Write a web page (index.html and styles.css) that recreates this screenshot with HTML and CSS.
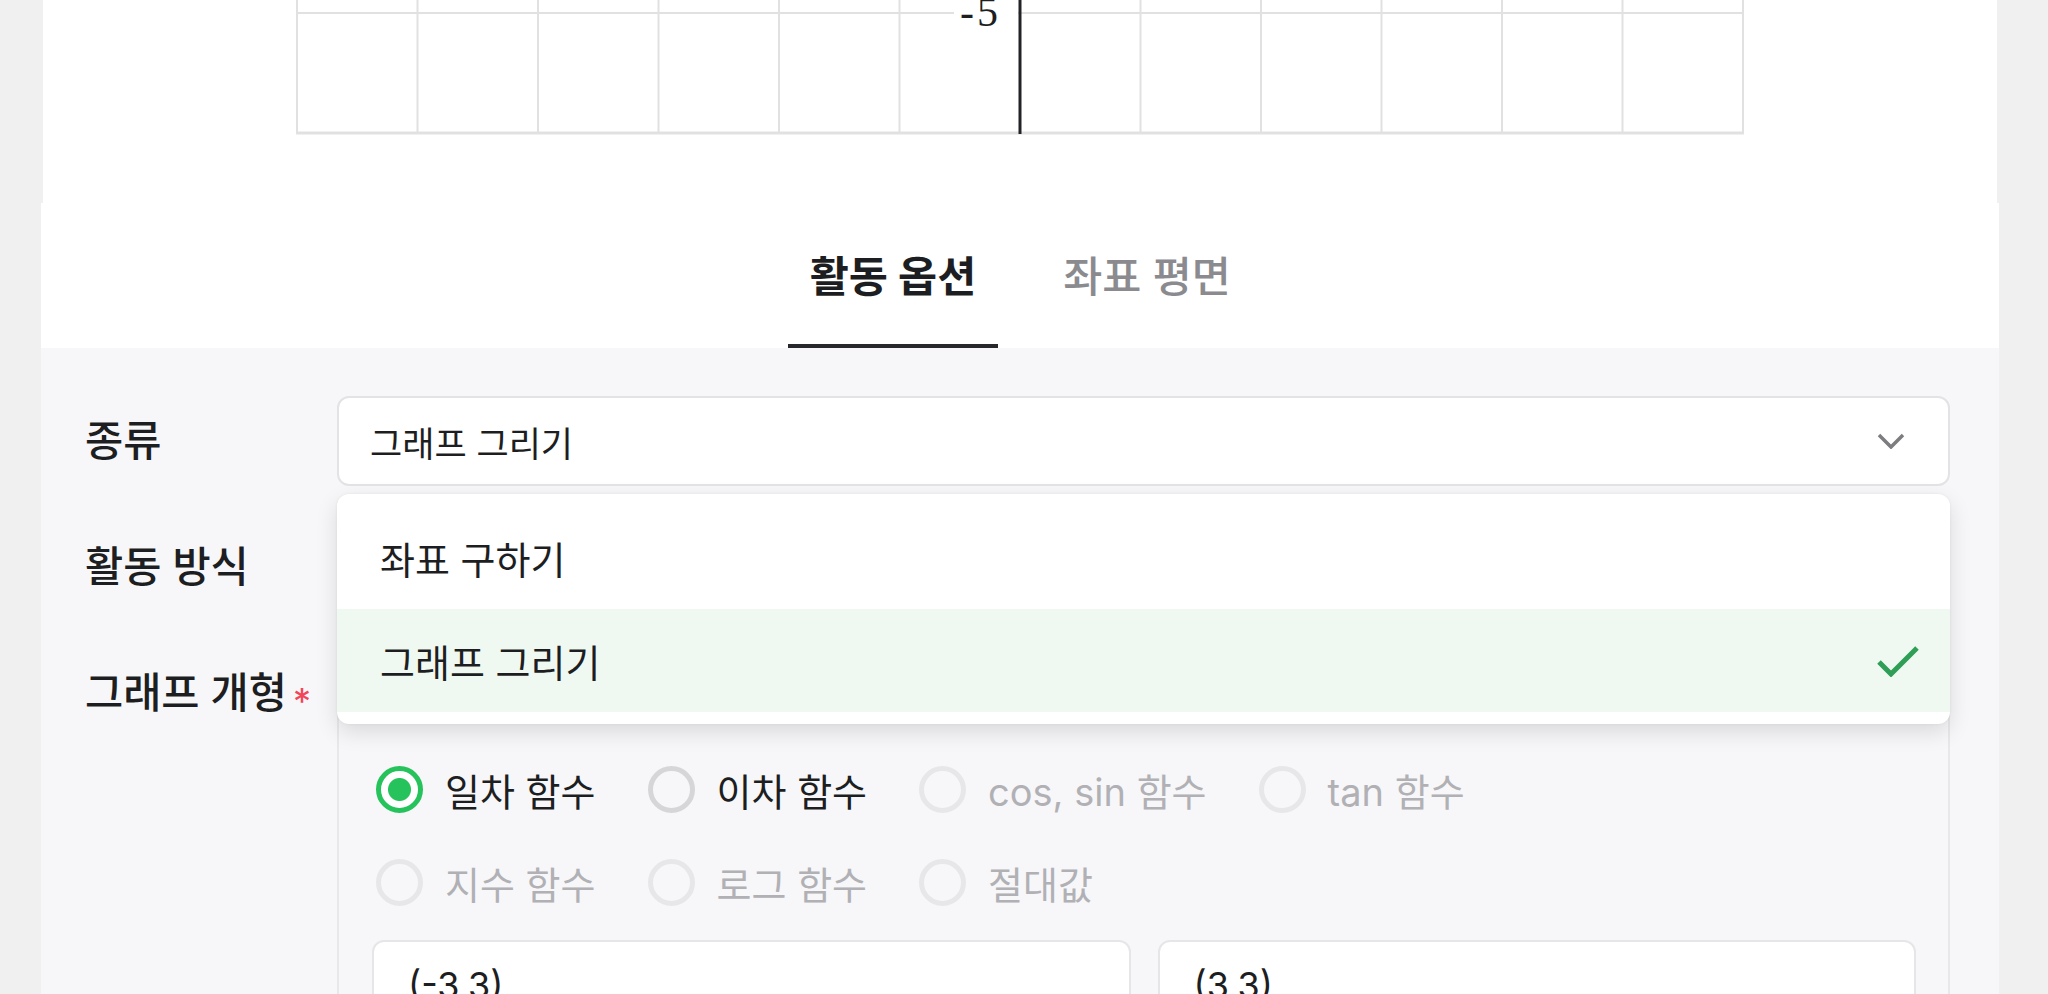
FILE: index.html
```html
<!DOCTYPE html>
<html lang="ko">
<head>
<meta charset="utf-8">
<title>활동 옵션</title>
<link rel="stylesheet" href="styles.css">
</head>
<body>
<div class="page">
  <section class="graph-card">
    <svg class="graph" width="1448" height="136" viewBox="0 0 1448 136">
      <g class="grid-lines">
        <line x1="1" y1="0" x2="1" y2="134"/>
        <line x1="121.5" y1="0" x2="121.5" y2="134"/>
        <line x1="242" y1="0" x2="242" y2="134"/>
        <line x1="362.5" y1="0" x2="362.5" y2="134"/>
        <line x1="483" y1="0" x2="483" y2="134"/>
        <line x1="603.5" y1="0" x2="603.5" y2="134"/>
        <line x1="844.5" y1="0" x2="844.5" y2="134"/>
        <line x1="965" y1="0" x2="965" y2="134"/>
        <line x1="1085.5" y1="0" x2="1085.5" y2="134"/>
        <line x1="1206" y1="0" x2="1206" y2="134"/>
        <line x1="1326.5" y1="0" x2="1326.5" y2="134"/>
        <line x1="1447" y1="0" x2="1447" y2="134"/>
        <line x1="0" y1="13" x2="1448" y2="13"/>
        <line x1="0" y1="133" x2="1448" y2="133" class="grid-bottom"/>
      </g>
      <rect x="658" y="0" width="64" height="28" class="label-bg"/>
      <text x="705" y="26" class="axis-label">-5</text>
      <line x1="724" y1="0" x2="724" y2="134" class="axis"/>
    </svg>
  </section>

  <section class="sheet">
    <nav class="tabs">
      <div class="tab active">활동 옵션</div>
      <div class="tab">좌표 평면</div>
    </nav>

    <div class="form">
      <div class="label">종류</div>
      <div class="field">
        <div class="select">
          <span>그래프 그리기</span>
          <svg class="chevron" width="28" height="16" viewBox="0 0 28 16"><polyline points="2,2 14,14 26,2"/></svg>
        </div>
        <div class="dropdown">
          <div class="option">좌표 구하기</div>
          <div class="option selected">
            <span>그래프 그리기</span>
            <svg class="check" width="42" height="32" viewBox="0 0 42 32"><polyline points="2,17 14,29 40,3"/></svg>
          </div>
        </div>
      </div>

      <div class="label">활동 방식</div>
      <div class="field">
        <div class="select"></div>
      </div>

      <div class="label">그래프 개형<span class="req">*</span></div>
      <div class="field">
        <div class="group-box">
          <div class="radio-rows">
            <div class="radio-row">
              <div class="radio on"><span class="dot"></span><span>일차 함수</span></div>
              <div class="radio"><span class="dot"></span><span>이차 함수</span></div>
              <div class="radio disabled"><span class="dot"></span><span>cos, sin 함수</span></div>
              <div class="radio disabled"><span class="dot"></span><span>tan 함수</span></div>
            </div>
            <div class="radio-row">
              <div class="radio disabled"><span class="dot"></span><span>지수 함수</span></div>
              <div class="radio disabled"><span class="dot"></span><span>로그 함수</span></div>
              <div class="radio disabled"><span class="dot"></span><span>절대값</span></div>
            </div>
          </div>
          <div class="coords">
            <div class="input">(-3,3)</div>
            <div class="input">(3,3)</div>
          </div>
        </div>
      </div>
    </div>
  </section>
</div>
</body>
</html>
```

FILE: styles.css
```css
html, body {
  margin: 0;
  padding: 0;
}

body {
  background: #f0f0f0;
  font-family: "Inter", "Noto Sans CJK KR", sans-serif;
  color: #1d1e22;
  height: 994px;
  overflow: hidden;
}

.page {
  display: flex;
  flex-direction: column;
}

/* upper graph card */
.graph-card {
  margin: 0 51px 0 43px;
  height: 203px;
  background: #ffffff;
  display: flex;
  justify-content: center;
  align-items: flex-start;
}

.graph {
  display: block;
}

.grid-lines line {
  stroke: #e1e1e1;
  stroke-width: 2;
}

.grid-lines .grid-bottom {
  stroke-width: 3;
}

.label-bg {
  fill: #ffffff;
}

.axis-label {
  font-family: "Liberation Serif", serif;
  font-size: 42px;
  fill: #1d1e22;
  text-anchor: end;
  letter-spacing: 3px;
}

.axis {
  stroke: #222327;
  stroke-width: 3;
}

/* bottom sheet */
.sheet {
  margin: 0 49px 0 41px;
  background: #f7f7f9;
  min-height: 800px;
}

.tabs {
  height: 145px;
  background: #ffffff;
  display: flex;
  justify-content: center;
  gap: 44px;
}

.tab {
  width: 210px;
  box-sizing: border-box;
  display: flex;
  align-items: center;
  justify-content: center;
  font-size: 42.5px;
  font-weight: 500;
  color: #8b8b8f;
  border-bottom: 4px solid transparent;
  white-space: nowrap;
}

.tab.active {
  color: #1d1e22;
  font-weight: 700;
  border-bottom-color: #26282c;
}

.form {
  display: grid;
  grid-template-columns: 252px 1fr;
  row-gap: 36px;
  padding: 48px 49px 60px 44px;
}

.label {
  font-size: 41.5px;
  font-weight: 500;
  line-height: 90px;
  white-space: nowrap;
}

.req {
  color: #f2455a;
  font-size: 36px;
  font-weight: 400;
  margin-left: 6px;
  vertical-align: -6px;
}

.field {
  position: relative;
  min-width: 0;
}

.select {
  height: 90px;
  box-sizing: border-box;
  background: #ffffff;
  border: 2px solid #e3e3e6;
  border-radius: 12px;
  display: flex;
  align-items: center;
  justify-content: space-between;
  padding: 0 43px 0 31px;
  font-size: 35px;
}

.chevron polyline {
  fill: none;
  stroke: #7d7d80;
  stroke-width: 3.5;
}

.dropdown {
  position: absolute;
  top: calc(100% + 8px);
  left: 0;
  right: 0;
  z-index: 2;
  background: #ffffff;
  border-radius: 12px;
  padding: 12px 0;
  box-shadow: 0 8px 22px rgba(0, 0, 0, 0.12), 0 0 3px rgba(0, 0, 0, 0.06);
}

.option {
  height: 103px;
  display: flex;
  align-items: center;
  justify-content: space-between;
  padding: 0 31px 0 43px;
  font-size: 38px;
}

.option.selected {
  background: #eff9f2;
}

.check polyline {
  fill: none;
  stroke: #2f9f57;
  stroke-width: 5;
}

.group-box {
  border: 2px solid #e8e8eb;
  border-radius: 12px;
  padding: 115px 32px 40px 33px;
}

.radio-rows {
  display: flex;
  flex-direction: column;
  gap: 45px;
  padding-left: 4px;
}

.radio-row {
  display: flex;
  gap: 52px;
}

.radio {
  display: flex;
  align-items: center;
  gap: 22px;
  height: 48px;
  font-size: 38px;
  white-space: nowrap;
}

.dot {
  width: 47px;
  height: 47px;
  box-sizing: border-box;
  border-radius: 50%;
  border: 5px solid #d6d6d8;
  flex: none;
}

.radio.on .dot {
  border-color: #26c35c;
  background: radial-gradient(circle, #26c35c 11px, #ffffff 12px);
}

.radio.disabled {
  color: #b1b1b5;
}

.radio.disabled .dot {
  border-color: #e7e7e9;
}

.coords {
  display: grid;
  grid-template-columns: 1fr 1fr;
  gap: 27px;
  margin-top: 34px;
}

.input {
  height: 90px;
  box-sizing: border-box;
  background: #ffffff;
  border: 2px solid #e6e6e8;
  border-radius: 12px;
  display: flex;
  align-items: center;
  padding: 0 34px;
  font-size: 36px;
}
```
